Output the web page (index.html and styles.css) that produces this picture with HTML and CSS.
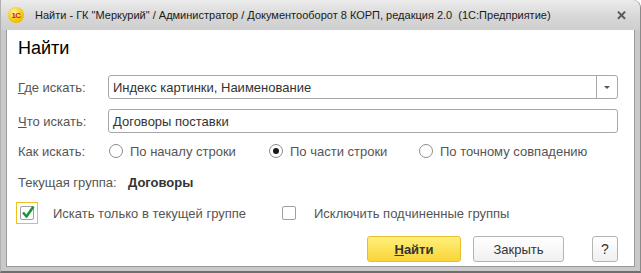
FILE: index.html
```html
<!DOCTYPE html>
<html lang="ru">
<head>
    <meta charset="UTF-8">
    <title>Найти</title>
    <link rel="stylesheet" href="styles.css">
</head>
<body>
    <div class="window">
        <div class="titlebar">
            <span class="app-icon">1С</span>
            <span class="title">Найти - ГК "Меркурий" / Администратор / Документооборот 8 КОРП, редакция 2.0&nbsp; (1С:Предприятие)</span>
            <span class="close">&#x2715;</span>
        </div>
        <div class="client">
            <h1>Найти</h1>

            <div class="row">
                <label class="label"><u>Г</u>де искать:</label>
                <div class="field combo">
                    <span class="value">Индекс картинки, Наименование</span>
                    <span class="drop"><span class="arrow"></span></span>
                </div>
            </div>

            <div class="row">
                <label class="label"><u>Ч</u>то искать:</label>
                <div class="field">
                    <span class="value">Договоры поставки</span>
                </div>
            </div>

            <div class="row radios">
                <span class="label">Как искать:</span>
                <span class="radio r1"><span class="dot"></span>По началу строки</span>
                <span class="radio r2"><span class="dot on"></span>По части строки</span>
                <span class="radio r3"><span class="dot"></span>По точному совпадению</span>
            </div>

            <div class="group">
                <span class="group-label">Текущая группа:</span>
                <b>Договоры</b>
            </div>

            <div class="checks">
                <span class="check c1">
                    <span class="focus">
                        <span class="box">
                            <svg class="tick" width="16" height="16" viewBox="0 0 16 16"><path d="M3 8.5 L6.5 12.5 L13.5 2.5" fill="none" stroke="#17963a" stroke-width="2.6" stroke-linejoin="round"/></svg>
                        </span>
                    </span>
                    Искать только в текущей группе
                </span>
                <span class="check c2"><span class="box"></span>Исключить подчиненные группы</span>
            </div>

            <div class="buttons">
                <button class="btn primary"><u>Н</u>айти</button>
                <button class="btn close-btn">Закрыть</button>
                <button class="btn help">?</button>
            </div>
        </div>
    </div>
</body>
</html>
```

FILE: styles.css
```css
body {
    margin: 0;
    font-family: 'Liberation Sans', Arial, sans-serif;
    background: #ffffff;
}

.window {
    width: 641px;
    height: 273px;
    box-sizing: border-box;
    background: #c9c9c9;
    border-right: 1px solid #8a8a8a;
    border-bottom: 2px solid #6e6e6e;
    border-top-right-radius: 8px;
    border-left: 1px solid #b0b0b0;
    display: flex;
    flex-direction: column;
}

.titlebar {
    height: 30px;
    display: flex;
    align-items: center;
    padding: 0 10px 0 7px;
    background: linear-gradient(#ececec, #d6d6d6 60%, #cfcfcf);
    border-top-right-radius: 8px;
    font-size: 11px;
    color: #1a1a1a;
}

.app-icon {
    width: 16px;
    height: 16px;
    border-radius: 50%;
    background: radial-gradient(circle at 40% 35%, #fff6a0, #f6c400 60%, #e0a000);
    color: #d0201a;
    font-size: 8px;
    font-weight: bold;
    display: flex;
    align-items: center;
    justify-content: center;
    margin-right: 11px;
    letter-spacing: -0.5px;
}

.title {
    flex: 1;
    white-space: nowrap;
}

.close {
    font-size: 13px;
    font-weight: bold;
    color: #555;
    margin-right: 3px;
}

.client {
    flex: 1;
    margin: 0 5px 4px 5px;
    background: #ffffff;
    border-left: 1px solid #9a9a9a;
    border-right: 1px solid #9a9a9a;
    border-bottom: 1px solid #9a9a9a;
    padding: 6px 16px 0 11px;
    color: #555;
    font-size: 13px;
}

h1 {
    margin: 0 0 17px 0;
    font-size: 18px;
    font-weight: normal;
    color: #000;
    height: 22px;
    line-height: 24px;
}

.row {
    display: flex;
    align-items: center;
    height: 24px;
    margin-bottom: 10px;
}

.label {
    width: 90px;
    flex: none;
}

.label u {
    text-decoration: underline;
}

.field {
    flex: 1;
    height: 24px;
    box-sizing: border-box;
    border: 1px solid #a8a8a8;
    border-radius: 3px;
    display: flex;
    align-items: center;
    padding-left: 4px;
    color: #333;
}

.value {
    flex: 1;
}

.drop {
    width: 20px;
    height: 100%;
    border-left: 1px solid #a8a8a8;
    display: flex;
    align-items: center;
    justify-content: center;
}

.arrow {
    width: 0;
    height: 0;
    border-left: 3px solid transparent;
    border-right: 3px solid transparent;
    border-top: 3px solid #555;
}

.radios {
    height: 20px;
    margin-bottom: 11px;
    margin-top: -2px;
}

.radio {
    display: flex;
    align-items: center;
}

.r1 { width: 160px; }
.r2 { width: 150px; }

.dot {
    width: 12px;
    height: 12px;
    border: 1px solid #8c8c8c;
    border-radius: 50%;
    margin: 0 7px 0 1px;
    position: relative;
    background: #fff;
}

.dot.on::after {
    content: "";
    position: absolute;
    left: 3px;
    top: 3px;
    width: 6px;
    height: 6px;
    border-radius: 50%;
    background: #1a1a1a;
}

.group {
    height: 20px;
    display: flex;
    align-items: center;
    margin-bottom: 9px;
}

.group-label {
    width: 110px;
}

.group b {
    color: #333;
}

.checks {
    display: flex;
    align-items: center;
    height: 24px;
}

.check {
    display: flex;
    align-items: center;
}

.c1 {
    width: 266px;
    margin-left: -2px;
}

.focus {
    width: 20px;
    height: 20px;
    border: 1px solid #f0c020;
    display: flex;
    align-items: center;
    justify-content: center;
    margin-right: 15px;
}

.box {
    width: 14px;
    height: 14px;
    box-sizing: border-box;
    border: 1px solid #a0a0a0;
    border-radius: 2px;
    display: flex;
    align-items: center;
    justify-content: center;
    margin-right: 18px;
    background: #fff;
    position: relative;
}

.tick {
    position: absolute;
    left: -1px;
    top: -3px;
}

.focus .box {
    margin-right: 0;
}

.buttons {
    display: flex;
    justify-content: flex-end;
    margin-top: 11px;
}

.btn {
    height: 26px;
    box-sizing: border-box;
    border: 1px solid #b4b4b4;
    border-radius: 3px;
    background: linear-gradient(#ffffff, #f0f0f0);
    font-family: 'Liberation Sans', Arial, sans-serif;
    font-size: 13px;
    color: #333;
    padding: 0;
    margin-left: 12px;
}

.primary {
    width: 94px;
    background: linear-gradient(#fff07a, #f9d43a);
    border-color: #e8be30;
    font-weight: bold;
    color: #333;
}

.close-btn {
    width: 91px;
}

.help {
    width: 26px;
    margin-left: 28px;
    font-size: 14px;
}
```
